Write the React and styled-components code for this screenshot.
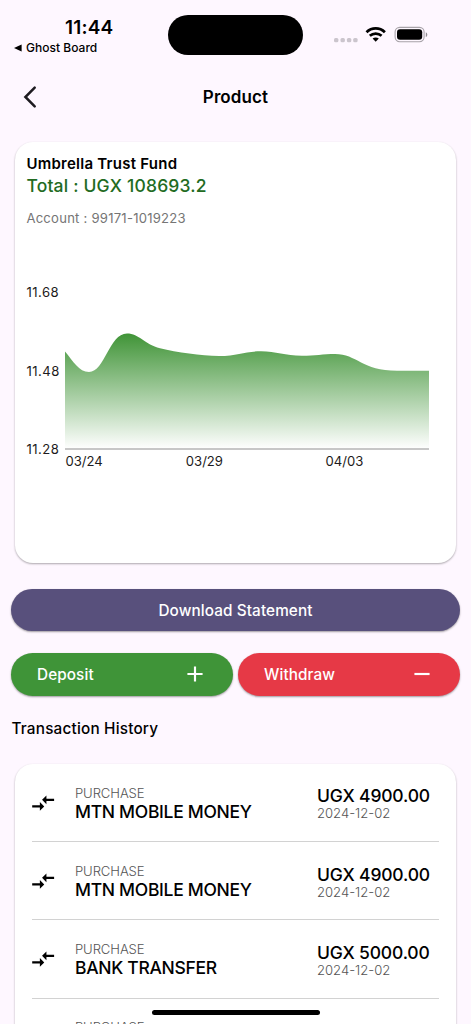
import React from "react";
import styled, { createGlobalStyle } from "styled-components";

const GlobalStyle = createGlobalStyle`
  * {
    box-sizing: border-box;
  }

  body {
    margin: 0;
    background: #fef7ff;
    font-family: Inter, "Liberation Sans", sans-serif;
    color: #000;
  }
`;

const Screen = styled.div`
  position: relative;
  width: 471px;
  height: 1024px;
  overflow: hidden;
  background: #fef7ff;
`;

const StatusBar = styled.div`
  display: grid;
  grid-template-columns: 168px 135px 1fr;
  height: 70px;
`;

const StatusLeft = styled.div`
  padding: 16px 0 0 14px;
`;

const Clock = styled.div`
  padding-left: 51px;
  font-size: 19px;
  line-height: 23px;
  font-weight: 600;
  letter-spacing: 0.2px;
`;

const BackToApp = styled.div`
  display: flex;
  align-items: center;
  gap: 4px;
  font-size: 12px;
  line-height: 17px;
  font-weight: 500;
  letter-spacing: 0.02px;
`;

const Island = styled.div`
  height: 40px;
  margin-top: 15px;
  border-radius: 20px;
  background: #000;
`;

const StatusIcons = styled.div`
  display: flex;
  align-items: flex-start;
  padding: 26px 0 0 31px;
`;

const AppBar = styled.div`
  display: grid;
  grid-template-columns: 60px 1fr 60px;
  align-items: center;
  height: 54px;
`;

const BackButton = styled.div`
  display: flex;
  padding-left: 22px;
`;

const Title = styled.div`
  text-align: center;
  font-size: 17px;
  font-weight: 600;
  letter-spacing: 0.1px;
`;

const Card = styled.div`
  margin: 0 15px;
  background: #fff;
  border-radius: 18px;
  box-shadow: 0 1px 2px rgba(0, 0, 0, 0.28), 0 1px 3px rgba(0, 0, 0, 0.06);
`;

const FundCard = styled(Card)`
  height: 421px;
  margin-top: 18px;
  padding: 11px 11px 0 11.4px;
`;

const FundName = styled.div`
  font-size: 15px;
  line-height: 21px;
  font-weight: 600;
  letter-spacing: 0.25px;
`;

const FundTotal = styled.div`
  font-size: 17.5px;
  line-height: 24px;
  font-weight: 500;
  letter-spacing: 0.18px;
  color: #226b22;
`;

const Account = styled.div`
  margin-top: 11px;
  font-size: 13.1px;
  line-height: 18px;
  letter-spacing: 0.23px;
  color: #757575;
`;

const Chart = styled.div`
  display: grid;
  grid-template-columns: 38.6px 364px;
  margin-top: 56px;
  font-size: 13.1px;
  line-height: 18px;
  color: #1d1b20;
`;

const YAxis = styled.div`
  display: flex;
  flex-direction: column;
  justify-content: space-between;
  height: 175px;
  letter-spacing: 0.5px;
`;

const Plot = styled.svg`
  display: block;
  margin-top: 25px;
`;

const XAxis = styled.div`
  display: grid;
  grid-template-columns: 120.3px 139.7px 1fr;
  grid-column: 2;
  margin-top: -6px;
  padding-left: 0.5px;
`;

const Button = styled.div`
  display: flex;
  align-items: center;
  justify-content: ${props => (props.$split ? "space-between" : "center")};
  height: 42.5px;
  padding: ${props => (props.$split ? "0 25.5px 0 26px" : "1px 0 0")};
  border-radius: 22px;
  background: ${props => props.$color};
  box-shadow: 0 1px 2px rgba(0, 0, 0, 0.38);
  color: #fff;
  font-size: 15.3px;
  font-weight: 500;
  letter-spacing: 0.1px;
`;

const Actions = styled.div`
  display: grid;
  gap: 22px;
  margin: 25.5px 11px 0;
`;

const ButtonRow = styled.div`
  display: grid;
  grid-template-columns: 1fr 1fr;
  gap: 5px;
`;

const SectionTitle = styled.div`
  margin: 22.5px 0 0 11.5px;
  font-size: 15.3px;
  line-height: 22px;
  font-weight: 500;
  letter-spacing: 0.2px;
`;

const HistoryCard = styled(Card)`
  height: 300px;
  margin-top: 24px;
  padding: 0 17px;
`;

const Transaction = styled.div`
  display: grid;
  grid-template-columns: 43px 242px 1fr;
  height: 78.2px;
  border-bottom: 1px solid #d2d2d2;
`;

const TransferIcon = styled.svg`
  width: 26.3px;
  height: 26.3px;
  margin: 26px 0 0 -2px;
`;

const Details = styled.div`
  padding-top: 20.6px;
`;

const Amount = styled.div`
  padding-top: 22.4px;
`;

const Strong = styled.div`
  font-size: 17.5px;
  line-height: ${props => props.$line || "20px"};
  font-weight: 500;
  letter-spacing: ${props => props.$spacing || "-0.3px"};
  white-space: nowrap;
`;

const Muted = styled.div`
  font-size: 13.1px;
  line-height: 17px;
  font-weight: 300;
  letter-spacing: ${props => props.$spacing || "-0.1px"};
  color: #555;
`;

const HomeIndicator = styled.div`
  position: absolute;
  left: 152px;
  bottom: 9px;
  width: 168px;
  height: 5.5px;
  border-radius: 3px;
  background: #000;
`;

const transactions = [
  { name: "MTN MOBILE MONEY", amount: "4900.00", date: "2024-12-02" },
  { name: "MTN MOBILE MONEY", amount: "4900.00", date: "2024-12-02" },
  { name: "BANK TRANSFER", amount: "5000.00", date: "2024-12-02" },
  { name: "BANK TRANSFER", amount: "5000.00", date: "2024-12-02" }
];

const curve =
  "M0 43.5C8 53 14 64 24 64C40 64 44 25.5 62 25.5C74 25.5 80 36.5 95 40.3" +
  "C112 44.3 136 48 154 48C173 48 180 43.3 196 43.3C211 43.3 220 47.8 237 47.8" +
  "C250 47.8 258 46 270 46C292 46 297 62.8 332 62.8H364";

const App = () => (
  <Screen>
    <GlobalStyle />
    <StatusBar>
      <StatusLeft>
        <Clock>11:44</Clock>
        <BackToApp>
          <svg width="8" height="8" viewBox="0 0 8 8">
            <path d="M0 4L7.6 .4V7.6Z" />
          </svg>
          Ghost Board
        </BackToApp>
      </StatusLeft>
      <Island />
      <StatusIcons>
        <svg width="95" height="18" viewBox="0 0 95 18">
          <g fill="#cbc5cd">
            <rect x="0" y="12" width="4.4" height="4.2" rx="1.5" />
            <rect x="6.5" y="12" width="4.4" height="4.2" rx="1.5" />
            <rect x="12.9" y="12" width="4.4" height="4.2" rx="1.5" />
            <rect x="19.2" y="12" width="4.4" height="4.2" rx="1.5" />
          </g>
          <g fill="none" stroke="#000" strokeWidth="2.8">
            <path d="M32.5 6.2C37.8 1.2 45.6 1.2 50.9 6.2" />
            <path d="M35.8 9.8C39.2 6.9 44.2 6.9 47.6 9.8" />
          </g>
          <path d="M38.6 12.6C40.4 11.1 43 11.1 44.8 12.6L41.7 15.7Z" />
          <rect x="61.1" y="1.4" width="29" height="14.3" rx="4.6" fill="none" stroke="#a8a3a9" strokeWidth="1.1" />
          <rect x="63" y="3.3" width="25.2" height="10.5" rx="3" />
          <path d="M91.8 6.2C93.8 6.9 93.8 10.3 91.8 11Z" fill="#8f8b91" />
        </svg>
      </StatusIcons>
    </StatusBar>

    <AppBar>
      <BackButton>
        <svg width="16" height="24" viewBox="0 0 16 24">
          <path
            d="M12.7 2.7L3.4 12L12.7 21.3"
            fill="none"
            stroke="#1d1b20"
            strokeWidth="2.5"
            strokeLinecap="round"
          />
        </svg>
      </BackButton>
      <Title>Product</Title>
    </AppBar>

    <FundCard>
      <FundName>Umbrella Trust Fund</FundName>
      <FundTotal>Total : UGX 108693.2</FundTotal>
      <Account>Account : 99171-1019223</Account>
      <Chart>
        <YAxis>
          <span>11.68</span>
          <span>11.48</span>
          <span>11.28</span>
        </YAxis>
        <Plot width="364" height="142" viewBox="0 0 364 142">
          <defs>
            <linearGradient id="area" x1="0" y1="0" x2="0" y2="1">
              <stop offset="0" stopColor="#409437" />
              <stop offset="1" stopColor="#409437" stopOpacity="0" />
            </linearGradient>
          </defs>
          <path d={`${curve}V141H0Z`} fill="url(#area)" />
          <path d="M0 141H364" stroke="#b4b4b4" strokeWidth="1.3" />
        </Plot>
        <XAxis>
          <span>03/24</span>
          <span>03/29</span>
          <span>04/03</span>
        </XAxis>
      </Chart>
    </FundCard>

    <Actions>
      <Button $color="#58507c">Download Statement</Button>
      <ButtonRow>
        <Button $split $color="#3f9438">
          Deposit
          <svg width="26" height="26" viewBox="0 0 24 24" fill="#fff">
            <path d="M19 13h-6v6h-2v-6H5v-2h6V5h2v6h6z" />
          </svg>
        </Button>
        <Button $split $color="#e63946">
          Withdraw
          <svg width="26" height="26" viewBox="0 0 24 24" fill="#fff">
            <path d="M19 13H5v-2h14z" />
          </svg>
        </Button>
      </ButtonRow>
    </Actions>

    <SectionTitle>Transaction History</SectionTitle>
    <HistoryCard>
      {transactions.map((item, index) => (
        <Transaction key={index}>
          <TransferIcon viewBox="0 0 24 24">
            <path d="M9.01 14H2v2h7.01v3L13 15l-3.99-4v3zm5.98-1v-3H22V8h-7.01V5L11 9l3.99 4z" />
          </TransferIcon>
          <Details>
            <Muted>PURCHASE</Muted>
            <Strong>{item.name}</Strong>
          </Details>
          <Amount>
            <Strong $line="19px" $spacing="-0.18px">UGX {item.amount}</Strong>
            <Muted $spacing="0">{item.date}</Muted>
          </Amount>
        </Transaction>
      ))}
    </HistoryCard>
    <HomeIndicator />
  </Screen>
);

export default App;
